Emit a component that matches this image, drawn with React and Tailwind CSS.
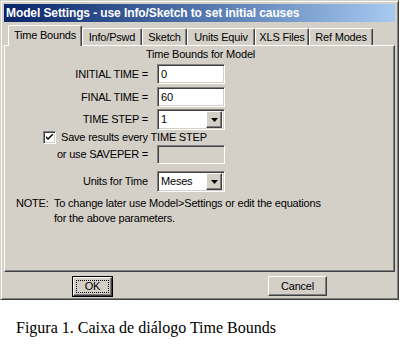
import React from 'react';

const sunken =
  'border border-t-[#808080] border-l-[#808080] border-b-white border-r-white shadow-[inset_1px_1px_0_#404040,inset_-1px_-1px_0_#d4d0c8]';
const raised =
  'border border-t-white border-l-white border-b-[#404040] border-r-[#404040] shadow-[inset_-1px_-1px_0_#808080]';

const tabs = [
  { label: 'Time Bounds', w: 'w-[74px]', active: true },
  { label: 'Info/Pswd', w: 'w-[60px]' },
  { label: 'Sketch', w: 'w-[45px]' },
  { label: 'Units Equiv', w: 'w-[68px]' },
  { label: 'XLS Files', w: 'w-[54px]' },
  { label: 'Ref Modes', w: 'w-[64px]' },
];

function TextField({ value, disabled, h = 'h-[20px]' }) {
  return (
    <div
      className={`${sunken} w-[68px] ${h} ${disabled ? 'bg-[#d4d0c8]' : 'bg-white'} flex items-center px-[3px]`}
    >
      {value}
    </div>
  );
}

function DropDown({ value }) {
  return (
    <div className={`${sunken} w-[68px] h-[21px] bg-white flex items-center pl-[3px] pr-[2px]`}>
      <span className="flex-1">{value}</span>
      <div className={`${raised} w-[16px] h-[17px] bg-[#d4d0c8] flex items-center justify-center`}>
        <svg width="7" height="4" viewBox="0 0 7 4">
          <path d="M0 0h7L3.5 4z" fill="#000" />
        </svg>
      </div>
    </div>
  );
}

function Row({ label, children, className = '' }) {
  return (
    <div className={`flex items-center ${className}`}>
      <div className="w-[143px] text-right">{label}</div>
      <div className="ml-[9px]">{children}</div>
    </div>
  );
}

export default function App() {
  return (
    <div className="w-[402px] h-[356px] bg-white overflow-hidden font-['Liberation_Sans',Arial,sans-serif] text-[11px] tracking-[-0.2px] text-black">
      {/* dialog */}
      <div className="w-[399px] h-[300px] bg-[#d4d0c8] border border-t-[#d4d0c8] border-l-[#d4d0c8] border-b-[#404040] border-r-[#404040] shadow-[inset_1px_1px_0_#fff,inset_-1px_-1px_0_#808080] p-[3px] flex flex-col">
        {/* title bar */}
        <div className="h-[18px] bg-gradient-to-r from-[#0a246a] to-[#a6caf0] text-white font-bold text-[12px] tracking-[-0.1px] flex items-center pl-[2px]">
          Model Settings - use Info/Sketch to set initial causes
        </div>

        {/* tabs */}
        <div className="mt-[3px] h-[20px] flex items-end pl-[4px]">
          {tabs.map((t) =>
            t.active ? (
              <div
                key={t.label}
                className={`${t.w} h-[21px] -mb-px relative z-10 bg-[#d4d0c8] border-t border-l border-white border-r border-r-[#404040] shadow-[inset_-1px_0_0_#808080] rounded-t-[2px] flex items-center justify-center pb-[1px]`}
              >
                {t.label}
              </div>
            ) : (
              <div
                key={t.label}
                className={`${t.w} h-[17px] bg-[#d4d0c8] border-t border-l border-white border-r border-r-[#404040] shadow-[inset_-1px_0_0_#808080] rounded-t-[2px] flex items-center justify-center`}
              >
                {t.label}
              </div>
            )
          )}
        </div>

        {/* panel */}
        <div className={`${raised} h-[227px] flex flex-col`}>
          <div className="mt-[1px] leading-[14px] text-center pl-[2px]">Time Bounds for Model</div>

          <Row label="INITIAL TIME =" className="mt-[3px]">
            <TextField value="0" />
          </Row>
          <Row label="FINAL TIME =" className="mt-[3px]">
            <TextField value="60" />
          </Row>
          <Row label="TIME STEP =" className="mt-[2px]">
            <DropDown value="1" />
          </Row>

          <div className="mt-[1px] h-[13px] flex items-center pl-[38px]">
            <div className={`${sunken} w-[13px] h-[13px] bg-white flex items-center justify-center`}>
              <svg width="7" height="7" viewBox="0 0 7 7">
                <path d="M0 2v2l2 2 5-5V-1L2 4z" fill="#000" />
              </svg>
            </div>
            <span className="ml-[5px]">Save results every TIME STEP</span>
          </div>

          <Row label="or use SAVEPER =" className="mt-[1px]">
            <TextField value="" disabled h="h-[19px]" />
          </Row>

          <Row label="Units for Time" className="mt-[7px]">
            <DropDown value="Meses" />
          </Row>

          <div className="mt-[4px] flex leading-[15px] pl-[11px]">
            <div className="w-[38px] shrink-0">NOTE:</div>
            <div>
              To change later use Model&gt;Settings or edit the equations
              <br />
              for the above parameters.
            </div>
          </div>
        </div>

        {/* buttons */}
        <div className="mt-[4px] h-[20px] flex items-center">
          <div className="ml-[68px] w-[41px] h-[21px] border border-black bg-[#d4d0c8]">
            <div className={`${raised} w-full h-full flex items-center justify-center p-[2px]`}>
              <div className="w-full h-full border border-dotted border-black flex items-center justify-center">
                OK
              </div>
            </div>
          </div>
          <div className={`${raised} ml-[155px] w-[59px] h-[20px] bg-[#d4d0c8] flex items-center justify-center`}>
            Cancel
          </div>
        </div>
      </div>

      {/* caption */}
      <div className="mt-[18px] pl-[16px] leading-[20px] font-['Liberation_Serif','Times_New_Roman',serif] text-[16px] tracking-normal">
        Figura 1. Caixa de diálogo Time Bounds
      </div>
    </div>
  );
}
